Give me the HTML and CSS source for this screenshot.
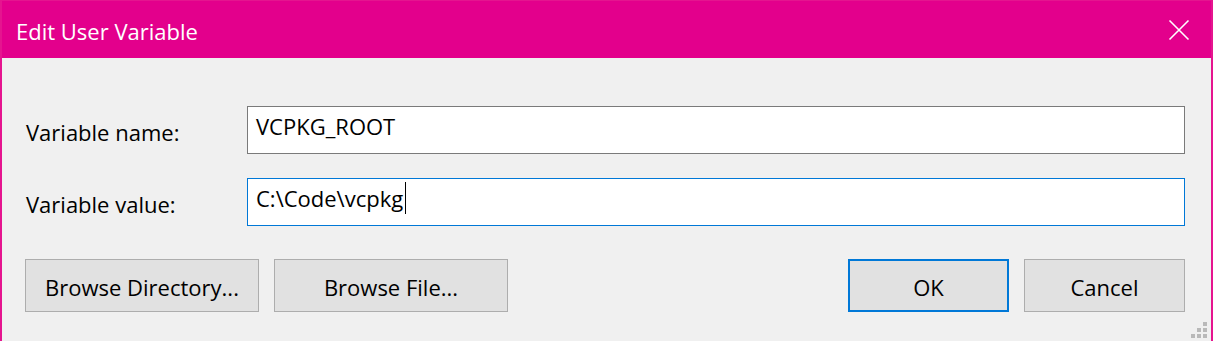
FILE: index.html
```html
<!DOCTYPE html>
<html lang="en">
<head>
    <meta charset="UTF-8">
    <meta name="viewport" content="width=device-width, initial-scale=1.0">
    <title>Edit User Variable</title>
    <link rel="stylesheet" href="styles.css">
</head>
<body>
    <div id="dialog">
        <!-- Title bar -->
        <div id="titleBar">
            <span id="titleText">Edit User Variable</span>
            <svg id="closeIcon" width="22" height="22" viewBox="0 0 22 22">
                <path d="M1.5 1.5 L20.5 20.5 M20.5 1.5 L1.5 20.5" stroke="#fff" stroke-width="1.6" fill="none"/>
            </svg>
        </div>

        <div id="content">
            <div class="fieldRow">
                <div class="fieldLabel">Variable name:</div>
                <div class="textBox">VCPKG_ROOT</div>
            </div>
            <div class="fieldRow">
                <div class="fieldLabel">Variable value:</div>
                <div class="textBox focused">C:\Code\vcpkg<span class="caret"></span></div>
            </div>

            <div id="buttonRow">
                <div class="buttonGroup">
                    <div class="button">Browse Directory...</div>
                    <div class="button">Browse File...</div>
                </div>
                <div class="buttonGroup">
                    <div class="button small default">OK</div>
                    <div class="button small">Cancel</div>
                </div>
            </div>
        </div>

        <!-- Resize grip -->
        <div id="grip">
            <span></span><span></span><span></span>
            <span></span><span></span><span></span>
            <span></span><span></span><span></span>
        </div>
    </div>
</body>
</html>
```

FILE: styles.css
```css
body {
    margin: 0;
    font-family: "Open Sans", "Noto Sans", sans-serif;
    background: #f0f0f0;
}

#dialog {
    position: relative;
    width: 1213px;
    height: 341px;
    box-sizing: border-box;
    border-left: 2px solid #e5158f;
    border-right: 2px solid #e5158f;
    border-top: 1px solid #e5158f;
    background: #f0f0f0;
    overflow: hidden;
}

#titleBar {
    height: 57px;
    background: #e3008c;
    display: flex;
    align-items: center;
    justify-content: space-between;
    padding: 0 21px 0 14px;
    color: #fff;
}

#titleText {
    font-size: 22px;
    margin-top: 3px;
}

#content {
    padding: 48px 26px 0 23px;
}

.fieldRow {
    display: flex;
    align-items: center;
    margin-bottom: 24px;
}

.fieldLabel {
    width: 221px;
    font-size: 22px;
    color: #000;
    padding-left: 1px;
    padding-top: 4px;
}

.textBox {
    flex: 1;
    height: 48px;
    box-sizing: border-box;
    border: 1px solid #7a7a7a;
    background: #fff;
    font-size: 22px;
    padding: 3px 8px 0 8px;
    line-height: 32px;
    color: #000;
}

.textBox.focused {
    border-color: #0078d7;
}

.caret {
    display: inline-block;
    width: 0;
    height: 32px;
    border-left: 1px solid #000;
    vertical-align: top;
    margin-left: 2px;
}

#buttonRow {
    display: flex;
    justify-content: space-between;
    margin-top: 33px;
}

.buttonGroup {
    display: flex;
    gap: 15px;
}

.button {
    width: 234px;
    height: 53px;
    box-sizing: border-box;
    border: 1px solid #adadad;
    background: #e1e1e1;
    display: flex;
    align-items: center;
    justify-content: center;
    font-size: 22px;
    color: #000;
    padding-top: 2px;
}

.button.small {
    width: 161px;
}

.button.default {
    border: 2px solid #0078d7;
}

#grip {
    position: absolute;
    right: 4px;
    bottom: 3px;
    display: grid;
    grid-template-columns: repeat(3, 4px);
    grid-template-rows: repeat(3, 4px);
    gap: 2px;
}

#grip span {
    background: #b9b9b9;
}

#grip span:nth-child(1),
#grip span:nth-child(2),
#grip span:nth-child(4) {
    background: transparent;
}
```
